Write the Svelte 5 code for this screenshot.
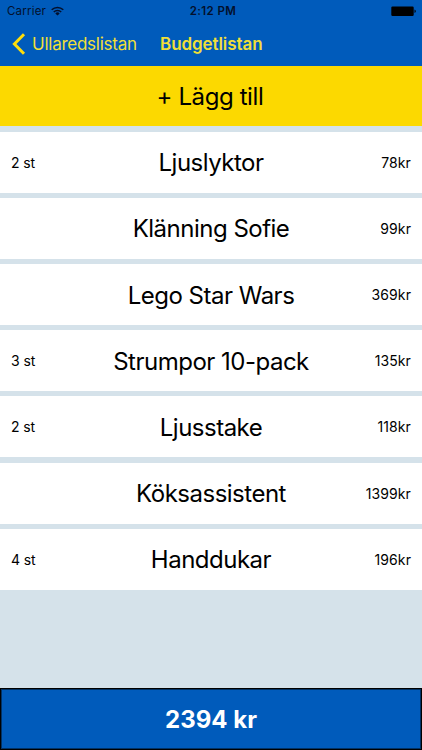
<script lang="ts">
  type Item = {
    name: string
    price: number
    count?: number
  }

  const items: Item[] = [
    { name: 'Ljuslyktor', price: 78, count: 2 },
    { name: 'Klänning Sofie', price: 99 },
    { name: 'Lego Star Wars', price: 369 },
    { name: 'Strumpor 10-pack', price: 135, count: 3 },
    { name: 'Ljusstake', price: 118, count: 2 },
    { name: 'Köksassistent', price: 1399 },
    { name: 'Handdukar', price: 196, count: 4 },
  ]
  const total = $derived(items.reduce((sum, item) => sum + item.price, 0))
</script>

<div class="screen">
  <header>
    <div class="status">
      <span class="carrier">
        Carrier
        <svg width="13" height="10" viewBox="0 0 13 10" fill="none" stroke="currentColor" stroke-width="1.6">
          <path d="M.7 3.8a8.3 8.3 0 0 1 11.6 0" />
          <path d="M2.8 6a5.3 5.3 0 0 1 7.4 0" />
          <path d="M6.5 9.6 4.3 7.4a3.2 3.2 0 0 1 4.4 0z" fill="currentColor" stroke="none" />
        </svg>
      </span>
      <time>2:12 PM</time>
      <svg class="battery" width="26" height="11" viewBox="0 0 26 11" fill="currentColor">
        <rect x=".3" y=".5" width="22.4" height="9.5" rx="1.2" />
        <path d="M23.5 3.6c1.8.4 1.8 3 0 3.4z" />
      </svg>
    </div>
    <nav>
      <button class="back" type="button">
        <svg width="14" height="22" viewBox="0 0 14 22" fill="none" stroke="currentColor" stroke-width="3">
          <path d="M12 1.2 2.4 11 12 20.8" />
        </svg>
        <span>Ullaredslistan</span>
      </button>
      <h1>Budgetlistan</h1>
    </nav>
  </header>

  <main>
    <button class="add" type="button">+ Lägg till</button>
    <ul>
      {#each items as item}
        <li>
          <span class="count">{item.count ? `${item.count} st` : ''}</span>
          <span class="name">{item.name}</span>
          <span class="price">{item.price}kr</span>
        </li>
      {/each}
    </ul>
  </main>

  <footer>{total} kr</footer>
</div>

<style>
  :global(body) { margin: 0; }
  .screen {
    display: flex;
    flex-direction: column;
    height: 750px;
    overflow: hidden;
    background: #d5e2ea;
    color: #000;
    font-family: Inter, "Liberation Sans", sans-serif;
  }
  button {
    padding: 0;
    border: none;
    background: none;
    font: inherit;
    color: inherit;
  }
  header {
    box-sizing: border-box;
    height: 65.5px;
    background: #005bbb;
  }
  .status {
    display: grid;
    grid-template-columns: 1fr auto 1fr;
    align-items: center;
    height: 22px;
    padding: 0 5px 0 7px;
    color: #03102c;
    font-size: 11.5px;
  }
  .carrier {
    display: flex;
    align-items: center;
    gap: 5px;
    letter-spacing: 0.2px;
  }
  time {
    font-weight: 600;
    letter-spacing: 0.4px;
    padding-left: 2px;
  }
  .battery { justify-self: end; color: #000; }
  nav {
    display: flex;
    align-items: center;
    height: 43px;
    padding-left: 12px;
    color: #f0df38;
    font-size: 17px;
  }
  .back {
    display: flex;
    align-items: center;
    gap: 6px;
    width: 148px;
    white-space: nowrap;
    letter-spacing: -0.25px;
  }
  .back svg { flex-shrink: 0; color: #ffdd0a; }
  h1 {
    margin: 0;
    font-size: 17px;
    font-weight: 600;
    letter-spacing: -0.08px;
  }
  main { flex: 1; }
  .add {
    display: block;
    box-sizing: border-box;
    width: 100%;
    height: 60.8px;
    padding: 1px 2px 0 0;
    background: #fcd900;
    font-size: 24px;
    letter-spacing: -0.4px;
  }
  ul {
    display: flex;
    flex-direction: column;
    gap: 5.2px;
    margin: 5.4px 0 0;
    padding: 0;
    list-style: none;
  }
  li {
    display: grid;
    grid-template-columns: 1fr auto 1fr;
    align-items: center;
    box-sizing: border-box;
    height: 61px;
    padding: 0 11px;
    background: #fff;
    font-size: 14px;
  }
  .count { letter-spacing: -0.1px; }
  .name {
    padding-top: 1px;
    font-size: 24px;
    letter-spacing: -0.5px;
  }
  .price {
    text-align: right;
    letter-spacing: 0.1px;
  }
  footer {
    display: flex;
    align-items: center;
    justify-content: center;
    box-sizing: border-box;
    height: 62px;
    border: 1px solid #000;
    box-shadow: inset 0 0 0 1px rgba(0, 0, 0, 0.45);
    background: #005bbb;
    color: #fff;
    font-size: 24px;
    font-weight: 700;
  }
</style>
